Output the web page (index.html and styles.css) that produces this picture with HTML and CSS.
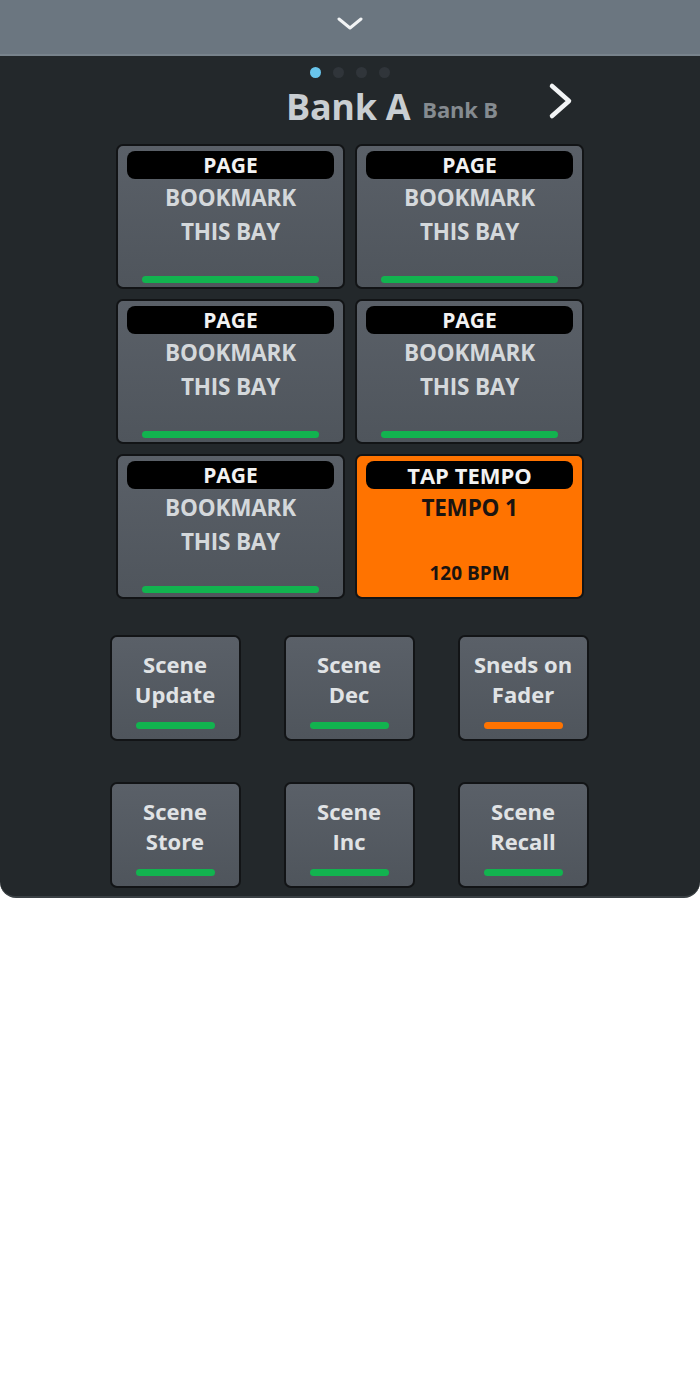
FILE: index.html
```html
<!DOCTYPE html>
<html lang="en">
<head>
  <meta charset="UTF-8" />
  <meta name="viewport" content="width=device-width, initial-scale=1.0" />
  <title>Bank A</title>
  <link rel="stylesheet" href="styles.css">
</head>
<body>
  <div class="panel">
    <div class="topbar">
      <svg class="chev-down" width="26" height="14" viewBox="0 0 26 14">
        <path d="M2 2 L13 11 L24 2" fill="none" stroke="#f2f4f5" stroke-width="3" stroke-linecap="round" stroke-linejoin="round"/>
      </svg>
    </div>

    <div class="dots">
      <span class="dot on"></span>
      <span class="dot"></span>
      <span class="dot"></span>
      <span class="dot"></span>
    </div>

    <div class="bank-head">
      <span class="bank-cur">Bank A</span>
      <span class="bank-next">Bank B</span>
      <svg class="chev-right" width="26" height="38" viewBox="0 0 26 38">
        <path d="M4 4 L21 19 L4 34" fill="none" stroke="#f2f4f5" stroke-width="4.5" stroke-linecap="round" stroke-linejoin="round"/>
      </svg>
    </div>

    <div class="bank-grid">
      <div class="pad">
        <div class="pad-label">PAGE</div>
        <div class="pad-text">BOOKMARK<br>THIS BAY</div>
        <div class="led green"></div>
      </div>
      <div class="pad">
        <div class="pad-label">PAGE</div>
        <div class="pad-text">BOOKMARK<br>THIS BAY</div>
        <div class="led green"></div>
      </div>
      <div class="pad">
        <div class="pad-label">PAGE</div>
        <div class="pad-text">BOOKMARK<br>THIS BAY</div>
        <div class="led green"></div>
      </div>
      <div class="pad">
        <div class="pad-label">PAGE</div>
        <div class="pad-text">BOOKMARK<br>THIS BAY</div>
        <div class="led green"></div>
      </div>
      <div class="pad">
        <div class="pad-label">PAGE</div>
        <div class="pad-text">BOOKMARK<br>THIS BAY</div>
        <div class="led green"></div>
      </div>
      <div class="pad tempo">
        <div class="pad-label">TAP TEMPO</div>
        <div class="pad-text">TEMPO 1</div>
        <div class="bpm">120 BPM</div>
      </div>
    </div>

    <div class="keys">
      <div class="key"><div class="key-text">Scene<br>Update</div><div class="led green"></div></div>
      <div class="key"><div class="key-text">Scene<br>Dec</div><div class="led green"></div></div>
      <div class="key"><div class="key-text">Sneds on<br>Fader</div><div class="led orange"></div></div>
      <div class="key"><div class="key-text">Scene<br>Store</div><div class="led green"></div></div>
      <div class="key"><div class="key-text">Scene<br>Inc</div><div class="led green"></div></div>
      <div class="key"><div class="key-text">Scene<br>Recall</div><div class="led green"></div></div>
    </div>
  </div>
</body>
</html>
```

FILE: styles.css
```css
* { box-sizing: border-box; }
body { margin: 0; background: #fff; font-family: "Open Sans", "Noto Sans", sans-serif; }

.panel {
  background: #23282b;
  border-radius: 0 0 16px 16px;
  border-bottom: 2px solid #3a4044;
  padding-bottom: 8px;
}

.topbar {
  height: 56px;
  background: #6b7680;
  border-bottom: 2px solid #78838c;
  display: flex;
  justify-content: center;
  align-items: center;
}
.chev-down { margin-top: -6px; }

.dots { display: flex; justify-content: center; gap: 12px; padding-top: 11px; }
.dot { width: 11px; height: 11px; border-radius: 50%; background: #30353a; }
.dot.on { background: #69c5ec; }

.bank-head {
  display: flex;
  align-items: center;
  padding-left: 286px;
  height: 52px;
  margin-top: 2px;
}
.bank-cur { font-size: 36px; font-weight: 700; color: #c9ced2; letter-spacing: -0.3px; }
.bank-next { font-size: 22px; font-weight: 700; color: #858b90; margin-left: 12px; margin-top: 6px; letter-spacing: -0.2px; }
.chev-right { margin-left: 50px; margin-top: -10px; }

.bank-grid {
  width: 468px;
  margin: 12px auto 0;
  display: grid;
  grid-template-columns: 1fr 1fr;
  gap: 10px;
}
.pad {
  height: 145px;
  background: linear-gradient(#5a6068, #4f555c);
  border: 2px solid #121416;
  border-radius: 7px;
  padding: 5px 9px 0;
  display: flex;
  flex-direction: column;
  align-items: center;
}
.pad-label {
  align-self: stretch;
  height: 28px;
  background: #000;
  border-radius: 8px;
  color: #f2f2f2;
  font-size: 21px;
  font-weight: 700;
  line-height: 28px;
  text-align: center;
}
.tempo .pad-label { font-size: 22px; }
.pad-text {
  color: #d4d8db;
  font-size: 22.5px;
  font-weight: 700;
  line-height: 34px;
  text-align: center;
  flex: 1;
  margin-top: 2px;
  letter-spacing: -0.2px;
}
.pad .led { width: 177px; margin-bottom: 4px; }

.pad.tempo { background: #ff7300; }
.tempo .pad-text { color: #1b1410; flex: 0; }
.tempo .bpm { color: #1b1410; font-size: 19px; font-weight: 700; margin-top: 35px; line-height: 26px; }

.led { height: 7px; border-radius: 4px; }
.led.green { background: #12b34f; }
.led.orange { background: #ff7300; }

.keys {
  width: 481px;
  margin: 36px auto 0;
  display: grid;
  grid-template-columns: repeat(3, 131px);
  column-gap: 43px;
  row-gap: 41px;
}
.key {
  height: 106px;
  background: linear-gradient(#5a6068, #4f555c);
  border: 2px solid #121416;
  border-radius: 7px;
  display: flex;
  flex-direction: column;
  align-items: center;
}
.key-text {
  color: #e0e3e5;
  font-size: 22px;
  font-weight: 700;
  line-height: 30px;
  text-align: center;
  margin-top: 12px;
  white-space: nowrap;
}
.key .led { width: 79px; margin-top: 13px; }
```
